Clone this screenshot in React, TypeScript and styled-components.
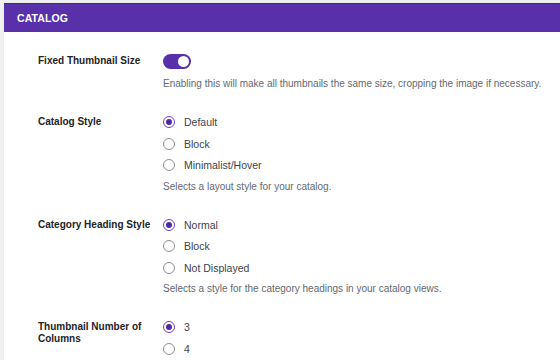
import styled, { createGlobalStyle } from "styled-components";

const GlobalStyle = createGlobalStyle`
  html, body {
    margin: 0;
    padding: 0;
    background: #f0f0f1;
  }
  body {
    font-family: "Liberation Sans", Arial, sans-serif;
    -webkit-font-smoothing: antialiased;
  }
`;

const Card = styled.div`
  margin: 3px 0 0 4px;
  background: #ffffff;
  min-height: 357px;
  box-shadow: 0 0 2px rgba(0, 0, 0, 0.06);
`;

const Header = styled.div`
  height: 29px;
  box-sizing: border-box;
  background: #5830aa;
  border-top: 1px solid #4a20a0;
  display: flex;
  align-items: center;
  padding-left: 13px;
  color: #ffffff;
  font-size: 10.5px;
  font-weight: 700;
  letter-spacing: 0.1px;
`;

const Body = styled.div`
  padding-top: 10px;
`;

const Row = styled.div`
  display: grid;
  grid-template-columns: 125px 1fr;
  padding: 12px 0 12px 34px;
`;

const Label = styled.div`
  font-size: 10px;
  font-weight: 700;
  color: #1d2327;
  line-height: 12px;
  padding-top: 1px;
  width: 120px;
`;

const Field = styled.div`
  display: flex;
  flex-direction: column;
  gap: 7.5px;
`;

const Toggle = styled.div<{ $on: boolean }>`
  width: 28px;
  height: 15px;
  border-radius: 8px;
  background: ${(p) => (p.$on ? "#5830aa" : "#c3c4c7")};
  position: relative;
  &::after {
    content: "";
    position: absolute;
    top: 2px;
    left: ${(p) => (p.$on ? "15px" : "2px")};
    width: 11px;
    height: 11px;
    border-radius: 50%;
    background: #ffffff;
  }
`;

const Option = styled.div`
  display: flex;
  align-items: center;
  gap: 9px;
  height: 14px;
  font-size: 10.5px;
  color: #3c434a;
`;

const Radio = styled.span<{ $checked: boolean }>`
  width: 12px;
  height: 12px;
  box-sizing: border-box;
  border-radius: 50%;
  border: 1px solid ${(p) => (p.$checked ? "#6a3fd0" : "#8c8f94")};
  display: flex;
  align-items: center;
  justify-content: center;
  flex-shrink: 0;
  &::after {
    content: "";
    display: ${(p) => (p.$checked ? "block" : "none")};
    width: 6px;
    height: 6px;
    border-radius: 50%;
    background: #4b2aa6;
  }
`;

const Description = styled.div`
  font-size: 10px;
  line-height: 14px;
  color: #646970;
`;

type Setting = {
  label: string;
  options: string[];
  selected: number;
  description?: string;
};

const settings: Setting[] = [
  {
    label: "Catalog Style",
    options: ["Default", "Block", "Minimalist/Hover"],
    selected: 0,
    description: "Selects a layout style for your catalog.",
  },
  {
    label: "Category Heading Style",
    options: ["Normal", "Block", "Not Displayed"],
    selected: 0,
    description: "Selects a style for the category headings in your catalog views.",
  },
  {
    label: "Thumbnail Number of Columns",
    options: ["3", "4"],
    selected: 0,
  },
];

export default function App() {
  return (
    <>
      <GlobalStyle />
      <Card>
        <Header>CATALOG</Header>
        <Body>
          <Row>
            <Label>Fixed Thumbnail Size</Label>
            <Field>
              <Toggle $on />
              <Description style={{ marginTop: 0.5 }}>
                Enabling this will make all thumbnails the same size, cropping the image if necessary.
              </Description>
            </Field>
          </Row>
          {settings.map((s) => (
            <Row key={s.label}>
              <Label>{s.label}</Label>
              <Field>
                {s.options.map((o, j) => (
                  <Option key={o}>
                    <Radio $checked={j === s.selected} />
                    {o}
                  </Option>
                ))}
                {s.description && <Description>{s.description}</Description>}
              </Field>
            </Row>
          ))}
        </Body>
      </Card>
    </>
  );
}
